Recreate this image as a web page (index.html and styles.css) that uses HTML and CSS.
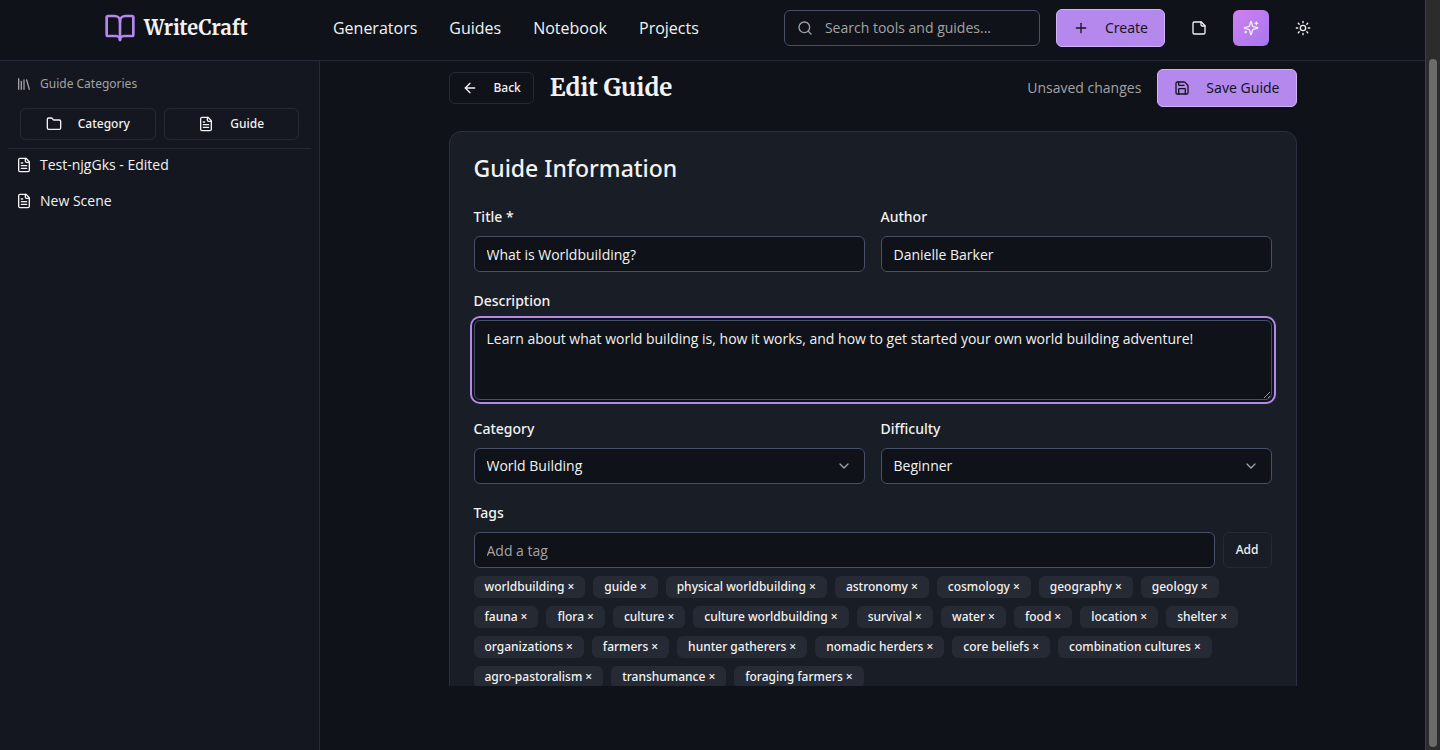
FILE: index.html
```html
<!DOCTYPE html>
<html lang="en">
<head>
<meta charset="utf-8">
<meta name="viewport" content="width=device-width, initial-scale=1">
<title>Edit Guide - WriteCraft</title>
<link rel="stylesheet" href="styles.css">
</head>
<body>
<svg class="sprite" aria-hidden="true">
  <symbol id="file-text" viewBox="0 0 24 24"><path d="M15 2H6a2 2 0 0 0-2 2v16a2 2 0 0 0 2 2h12a2 2 0 0 0 2-2V7Z"/><path d="M14 2v4a2 2 0 0 0 2 2h4"/><path d="M10 9H8"/><path d="M16 13H8"/><path d="M16 17H8"/></symbol>
  <symbol id="chevron" viewBox="0 0 24 24"><path d="m6 9 6 6 6-6"/></symbol>
</svg>
<div class="app">
  <header class="topbar">
    <div class="topbar-inner">
      <a class="brand" href="#">
        <svg class="icon icon-lg" viewBox="0 0 24 24"><path d="M12 7v14"/><path d="M3 18a1 1 0 0 1-1-1V4a1 1 0 0 1 1-1h5a4 4 0 0 1 4 4 4 4 0 0 1 4-4h5a1 1 0 0 1 1 1v13a1 1 0 0 1-1 1h-6a3 3 0 0 0-3 3 3 3 0 0 0-3-3z"/></svg>
        <span>WriteCraft</span>
      </a>
      <nav class="nav">
        <a href="#">Generators</a>
        <a href="#">Guides</a>
        <a href="#">Notebook</a>
        <a href="#">Projects</a>
      </nav>
      <div class="actions">
        <label class="search">
          <svg class="icon" viewBox="0 0 24 24"><circle cx="11" cy="11" r="8"/><path d="m21 21-4.3-4.3"/></svg>
          <input type="search" placeholder="Search tools and guides..." aria-label="Search tools and guides">
        </label>
        <button class="btn btn-primary" type="button">
          <svg class="icon" viewBox="0 0 24 24"><path d="M5 12h14"/><path d="M12 5v14"/></svg>Create
        </button>
        <button class="icon-btn" type="button" aria-label="Notes">
          <svg class="icon" viewBox="0 0 24 24"><path d="M15.500 3H5a2 2 0 0 0-2 2v14a2 2 0 0 0 2 2h14a2 2 0 0 0 2-2V8.500Z"/><path d="M15 3v4a2 2 0 0 0 2 2h4"/></svg>
        </button>
        <button class="icon-btn icon-btn-ai" type="button" aria-label="Assistant">
          <svg class="icon" viewBox="0 0 24 24"><path d="M9.937 15.500A2 2 0 0 0 8.500 14.063l-6.135-1.582a.5.5 0 0 1 0-.962L8.500 9.936A2 2 0 0 0 9.937 8.500l1.582-6.135a.5.5 0 0 1 .963 0L14.063 8.500A2 2 0 0 0 15.500 9.937l6.135 1.581a.5.5 0 0 1 0 .964L15.500 14.063a2 2 0 0 0-1.437 1.437l-1.582 6.135a.5.5 0 0 1-.963 0z"/><path d="M20 3v4"/><path d="M22 5h-4"/><path d="M4 17v2"/><path d="M5 18H3"/></svg>
        </button>
        <button class="icon-btn" type="button" aria-label="Toggle theme">
          <svg class="icon" viewBox="0 0 24 24"><circle cx="12" cy="12" r="4"/><path d="M12 2v2M12 20v2M4.930 4.930l1.410 1.410M17.660 17.660l1.410 1.410M2 12h2M20 12h2M6.340 17.660l-1.410 1.410M19.070 4.930l-1.410 1.410"/></svg>
        </button>
      </div>
    </div>
  </header>
  <div class="body">
    <aside class="sidebar">
      <h2 class="side-title">
        <svg class="icon" viewBox="0 0 24 24"><path d="m16 6 4 14"/><path d="M12 6v14"/><path d="M8 8v12"/><path d="M4 4v16"/></svg>
        Guide Categories
      </h2>
      <div class="side-buttons">
        <button class="btn btn-outline" type="button">
          <svg class="icon" viewBox="0 0 24 24"><path d="M20 20a2 2 0 0 0 2-2V8a2 2 0 0 0-2-2h-7.900a2 2 0 0 1-1.690-.9L9.600 3.900A2 2 0 0 0 7.930 3H4a2 2 0 0 0-2 2v13a2 2 0 0 0 2 2Z"/></svg>Category
        </button>
        <button class="btn btn-outline" type="button"><svg class="icon"><use href="#file-text"/></svg>Guide</button>
      </div>
      <ul class="side-list">
        <li><a href="#"><svg class="icon"><use href="#file-text"/></svg>Test-njgGks - Edited</a></li>
        <li><a href="#"><svg class="icon"><use href="#file-text"/></svg>New Scene</a></li>
      </ul>
    </aside>
    <main class="main">
      <div class="content">
        <div class="page-head">
          <button class="btn btn-outline" type="button">
            <svg class="icon" viewBox="0 0 24 24"><path d="m12 19-7-7 7-7"/><path d="M19 12H5"/></svg>Back
          </button>
          <h1>Edit Guide</h1>
          <span class="status">Unsaved changes</span>
          <button class="btn btn-primary" type="submit" form="guide-form">
            <svg class="icon" viewBox="0 0 24 24"><path d="M15.200 3a2 2 0 0 1 1.400.6l3.800 3.800a2 2 0 0 1 .6 1.400V19a2 2 0 0 1-2 2H5a2 2 0 0 1-2-2V5a2 2 0 0 1 2-2z"/><path d="M17 21v-7a1 1 0 0 0-1-1H8a1 1 0 0 0-1 1v7"/><path d="M7 3v4a1 1 0 0 0 1 1h7"/></svg>Save Guide
          </button>
        </div>
        <form class="card" id="guide-form">
          <h2>Guide Information</h2>
          <div class="fields">
            <div class="field">
              <label for="title">Title *</label>
              <input class="control" id="title" type="text" value="What is Worldbuilding?">
            </div>
            <div class="field">
              <label for="author">Author</label>
              <input class="control" id="author" type="text" value="Danielle Barker">
            </div>
            <div class="field field-wide">
              <label for="description">Description</label>
              <textarea class="control is-focused" id="description">Learn about what world building is, how it works, and how to get started your own world building adventure!</textarea>
            </div>
            <div class="field">
              <label for="category">Category</label>
              <div class="select">
                <select class="control" id="category"><option>World Building</option></select>
                <svg class="icon"><use href="#chevron"/></svg>
              </div>
            </div>
            <div class="field">
              <label for="difficulty">Difficulty</label>
              <div class="select">
                <select class="control" id="difficulty"><option>Beginner</option></select>
                <svg class="icon"><use href="#chevron"/></svg>
              </div>
            </div>
            <div class="field field-wide">
              <label for="tag">Tags</label>
              <div class="tag-entry">
                <input class="control" id="tag" type="text" placeholder="Add a tag">
                <button class="btn btn-outline" type="button">Add</button>
              </div>
              <ul class="tags">
                <li>worldbuilding<button type="button">×</button></li>
                <li>guide<button type="button">×</button></li>
                <li>physical worldbuilding<button type="button">×</button></li>
                <li>astronomy<button type="button">×</button></li>
                <li>cosmology<button type="button">×</button></li>
                <li>geography<button type="button">×</button></li>
                <li>geology<button type="button">×</button></li>
                <li>fauna<button type="button">×</button></li>
                <li>flora<button type="button">×</button></li>
                <li>culture<button type="button">×</button></li>
                <li>culture worldbuilding<button type="button">×</button></li>
                <li>survival<button type="button">×</button></li>
                <li>water<button type="button">×</button></li>
                <li>food<button type="button">×</button></li>
                <li>location<button type="button">×</button></li>
                <li>shelter<button type="button">×</button></li>
                <li>organizations<button type="button">×</button></li>
                <li>farmers<button type="button">×</button></li>
                <li>hunter gatherers<button type="button">×</button></li>
                <li>nomadic herders<button type="button">×</button></li>
                <li>core beliefs<button type="button">×</button></li>
                <li>combination cultures<button type="button">×</button></li>
                <li>agro-pastoralism<button type="button">×</button></li>
                <li>transhumance<button type="button">×</button></li>
                <li>foraging farmers<button type="button">×</button></li>
              </ul>
            </div>
          </div>
        </form>
      </div>
    </main>
  </div>
</div>
<div class="scrollbar" aria-hidden="true"><div class="thumb"></div></div>
</body>
</html>
```
FILE: styles.css
```css
:root {
  --bg: #0f1219;
  --panel: #14171f;
  --card: #191d25;
  --chip: #262a34;
  --line: #262a35;
  --line-strong: #475066;
  --text: #f2f2f2;
  --muted: #a3a3a3;
  --accent: #b588ee;
  --medium: "Noto Sans", sans-serif;
}

* { box-sizing: border-box; }

body {
  margin: 0;
  height: 100vh;
  display: flex;
  overflow: hidden;
  background: var(--bg);
  color: var(--text);
  font: 14px/20px "Open Sans", "Noto Sans", sans-serif;
}

button, input, select, textarea { font: inherit; color: inherit; }
a { color: inherit; text-decoration: none; }
h1, h2, ul { margin: 0; padding: 0; }
ul { list-style: none; }

.sprite { position: absolute; width: 0; height: 0; }

.icon {
  width: 16px;
  height: 16px;
  flex: none;
  fill: none;
  stroke: currentColor;
  stroke-width: 2;
  stroke-linecap: round;
  stroke-linejoin: round;
}
.icon-lg { width: 32px; height: 32px; color: var(--accent); }

.app { flex: 1; min-width: 0; display: flex; flex-direction: column; }

/* Top bar */
.topbar { flex: none; border-bottom: 1px solid var(--line); }
.topbar-inner {
  max-width: 1281px;
  height: 60px;
  margin: 0 auto;
  padding: 0 32px 4px;
  display: flex;
  align-items: center;
  justify-content: space-between;
}
.brand {
  display: flex;
  align-items: center;
  gap: 8px;
  font: bold 20px/28px Merriweather, "DejaVu Serif", serif;
}
.nav { display: flex; gap: 32px; font-size: 16px; line-height: 24px; }
.actions { display: flex; align-items: center; gap: 16px; }

.search {
  width: 256px;
  height: 36px;
  padding: 0 12px;
  display: flex;
  align-items: center;
  gap: 12px;
  border: 1px solid var(--line-strong);
  border-radius: 6px;
  color: var(--muted);
}
.search input {
  flex: 1;
  min-width: 0;
  padding: 0;
  border: 0;
  outline: 0;
  background: none;
}
::placeholder { color: var(--muted); opacity: 1; }

.btn {
  display: inline-flex;
  align-items: center;
  justify-content: center;
  gap: 16px;
  border-radius: 6px;
  font-family: var(--medium);
  cursor: pointer;
}
.btn-primary {
  height: 38px;
  padding: 0 16px;
  border: 1px solid #d0b4f6;
  background: var(--accent);
  color: #14171f;
}
.btn-outline {
  height: 32px;
  padding: 0 12px;
  border: 1px solid var(--line);
  background: none;
  font-size: 12px;
  font-weight: 500;
}
.icon-btn {
  width: 36px;
  height: 36px;
  padding: 0;
  display: grid;
  place-items: center;
  border: 0;
  border-radius: 6px;
  background: none;
}
.icon-btn-ai { background: linear-gradient(135deg, #d07ff0, #a678ee); }

/* Sidebar */
.body { flex: 1; min-height: 0; display: flex; }
.sidebar {
  width: 320px;
  flex: none;
  padding: 7px 8px;
  background: var(--panel);
  border-right: 1px solid var(--line);
}
.side-title {
  height: 32px;
  padding: 0 8px;
  display: flex;
  align-items: center;
  gap: 8px;
  color: var(--muted);
  font: 400 12px/16px var(--medium);
}
.side-buttons {
  padding: 8px 12px;
  display: grid;
  grid-template-columns: 1fr 1fr;
  gap: 8px;
  border-bottom: 1px solid var(--line);
}
.side-list a {
  height: 32px;
  margin-bottom: 4px;
  padding: 0 8px;
  display: flex;
  align-items: center;
  gap: 8px;
}

/* Editor */
.main { flex: 1; min-width: 0; margin-bottom: 64px; overflow: hidden; }
.content { max-width: 896px; margin: 0 auto; padding: 8px 24px; }
.page-head { display: flex; align-items: center; gap: 16px; margin-bottom: 24px; }
.page-head h1 {
  flex: 1;
  font: bold 24px/32px Merriweather, "DejaVu Serif", serif;
}
.status { color: var(--muted); }

.card {
  padding: 24px;
  border: 1px solid #2b3040;
  border-radius: 12px;
  background: var(--card);
}
.card h2 { margin-bottom: 26px; font: 500 23px/24px var(--medium); }

.fields { display: grid; grid-template-columns: 1fr 1fr; gap: 18px 16px; }
.field { display: flex; flex-direction: column; gap: 8px; min-width: 0; }
.field-wide { grid-column: 1 / -1; }
.field label { font: 500 14px/22px var(--medium); }

.control {
  width: 100%;
  height: 36px;
  padding: 0 12px;
  border: 1px solid var(--line-strong);
  border-radius: 6px;
  outline: 0;
  background: var(--bg);
}
textarea.control { height: 80px; padding: 8px 12px; display: block; resize: vertical; }
.is-focused { box-shadow: 0 0 0 2px var(--bg), 0 0 0 4px var(--accent); }

.select { position: relative; }
.select select { display: block; appearance: none; }
.select .icon { position: absolute; right: 13px; top: 10px; color: var(--muted); pointer-events: none; }

.tag-entry { display: flex; gap: 8px; }
.tag-entry .control { flex: 1; min-width: 0; }
.tag-entry .btn { height: 36px; }

.tags { display: flex; flex-wrap: wrap; gap: 8px; }
.tags li {
  height: 22px;
  padding: 0 11px;
  display: flex;
  align-items: center;
  gap: 3px;
  border-radius: 6px;
  background: var(--chip);
  font: 500 12px/16px var(--medium);
}
.tags button { padding: 0; border: 0; background: none; }

/* Window scrollbar */
.scrollbar {
  width: 15px;
  flex: none;
  padding: 59px 3px 3px;
  display: flex;
  background: #2c2c2c;
  border-left: 1px solid #3f3f3f;
}
.thumb { flex: 1; border-radius: 4px; background: #6b6b6b; }
```
